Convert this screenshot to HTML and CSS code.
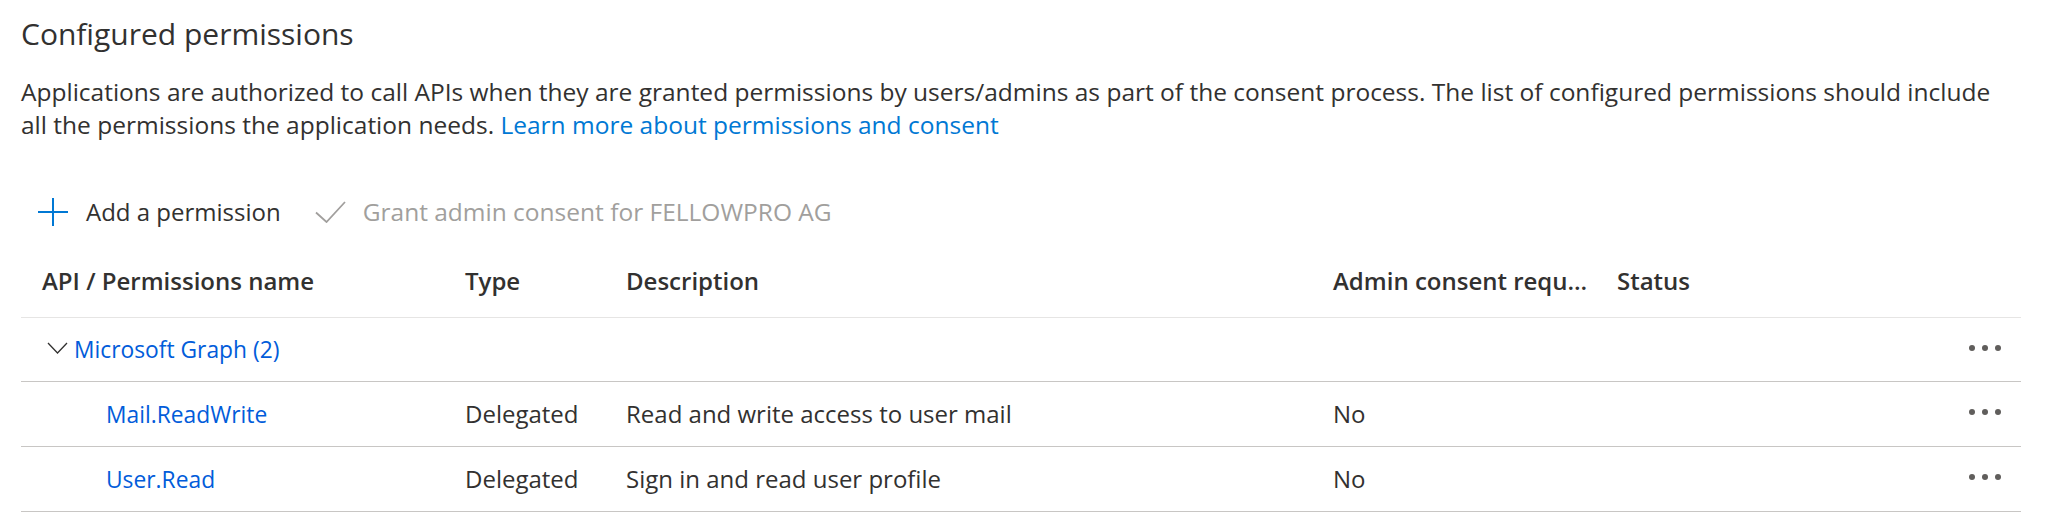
FILE: index.html
```html
<!DOCTYPE html>
<html lang="en">
<head>
<meta charset="utf-8">
<title>Configured permissions</title>
<link rel="stylesheet" href="styles.css">
</head>
<body>
<main class="page">
  <h1 class="title">Configured permissions</h1>
  <p class="intro">Applications are authorized to call APIs when they are granted permissions by users/admins as part of the consent process. The list of configured permissions should include all the permissions the application needs. <a class="learn" href="#">Learn more about permissions and consent</a></p>

  <div class="toolbar">
    <button class="tb-btn add" type="button">
      <svg class="icon-plus" width="30" height="28" viewBox="0 0 30 28"><path d="M15 0V28M0 14H30" stroke="#0078d4" stroke-width="2" fill="none"/></svg>
      <span>Add a permission</span>
    </button>
    <button class="tb-btn grant" type="button" disabled>
      <svg class="icon-check" width="31" height="22" viewBox="0 0 31 22"><path d="M1 11.5L11.5 21L30 1" stroke="#a19f9d" stroke-width="1.8" fill="none"/></svg>
      <span>Grant admin consent for FELLOWPRO AG</span>
    </button>
  </div>

  <div class="table">
    <div class="row head">
      <div class="cell name-head">API / Permissions name</div>
      <div class="cell">Type</div>
      <div class="cell">Description</div>
      <div class="cell">Admin consent required</div>
      <div class="cell">Status</div>
      <div class="cell"></div>
    </div>

    <div class="row group">
      <div class="group-name">
        <svg class="chevron" width="21" height="12" viewBox="0 0 21 12"><path d="M1 1L10.5 11L20 1" stroke="#323130" stroke-width="1.3" fill="none"/></svg>
        <a class="link" href="#">Microsoft Graph (2)</a>
      </div>
      <div class="actions"><span class="dot"></span><span class="dot"></span><span class="dot"></span></div>
    </div>

    <div class="row item">
      <div class="cell perm"><a class="link" href="#">Mail.ReadWrite</a></div>
      <div class="cell">Delegated</div>
      <div class="cell">Read and write access to user mail</div>
      <div class="cell">No</div>
      <div class="cell"></div>
      <div class="actions"><span class="dot"></span><span class="dot"></span><span class="dot"></span></div>
    </div>

    <div class="row item">
      <div class="cell perm"><a class="link" href="#">User.Read</a></div>
      <div class="cell">Delegated</div>
      <div class="cell">Sign in and read user profile</div>
      <div class="cell">No</div>
      <div class="cell"></div>
      <div class="actions"><span class="dot"></span><span class="dot"></span><span class="dot"></span></div>
    </div>
  </div>
</main>
</body>
</html>
```

FILE: styles.css
```css
* { box-sizing: border-box; }

body {
  margin: 0;
  background: #ffffff;
  color: #323130;
  font-family: "Open Sans", "Noto Sans", sans-serif;
}

.page {
  padding: 14px 25px 0 21px;
}

.title {
  margin: 0;
  font-size: 30px;
  font-weight: 400;
  line-height: 40px;
}

.intro {
  margin: 21px 0 0;
  max-width: 1995px;
  font-size: 24.5px;
  line-height: 33px;
}

.learn {
  color: #0078d4;
  text-decoration: none;
}

.toolbar {
  display: flex;
  align-items: center;
  height: 44px;
  margin-top: 49px;
}

.tb-btn {
  display: flex;
  align-items: center;
  border: 0;
  background: none;
  padding: 0;
  font: inherit;
  font-size: 24px;
  line-height: 44px;
  color: #323130;
}

.tb-btn.add {
  padding-left: 17px;
  gap: 18px;
}

.tb-btn.grant {
  margin-left: 34px;
  gap: 17px;
  color: #a19f9d;
  font-size: 24.5px;
}

.table {
  margin-top: 15px;
  font-size: 24px;
}

.row {
  display: grid;
  grid-template-columns: 432px 161px 707px 284px 1fr 80px;
}

.row.head {
  font-weight: 600;
  line-height: 64px;
  padding-bottom: 4px;
  border-bottom: 1px solid #e6e5e4;
}

.row.item,
.row.group {
  line-height: 63px;
  border-bottom: 1px solid #c8c6c4;
}

.row.group {
  display: flex;
  justify-content: space-between;
}

.cell {
  padding: 0 12px;
  white-space: nowrap;
  overflow: hidden;
  text-overflow: ellipsis;
}

.cell.name-head {
  padding-left: 21px;
}

.cell.perm {
  padding-left: 85px;
}

.group-name {
  display: flex;
  align-items: center;
  gap: 6px;
  padding-left: 26px;
}

.chevron {
  margin-top: -4px;
}

.link {
  color: #015cda;
  text-decoration: none;
  font-size: 22.8px;
}

.actions {
  display: flex;
  align-items: center;
  justify-content: flex-end;
  gap: 7px;
  width: 80px;
  padding-right: 20px;
  padding-bottom: 4px;
}

.dot {
  width: 6px;
  height: 6px;
  border-radius: 50%;
  background: #605e5c;
}
```
